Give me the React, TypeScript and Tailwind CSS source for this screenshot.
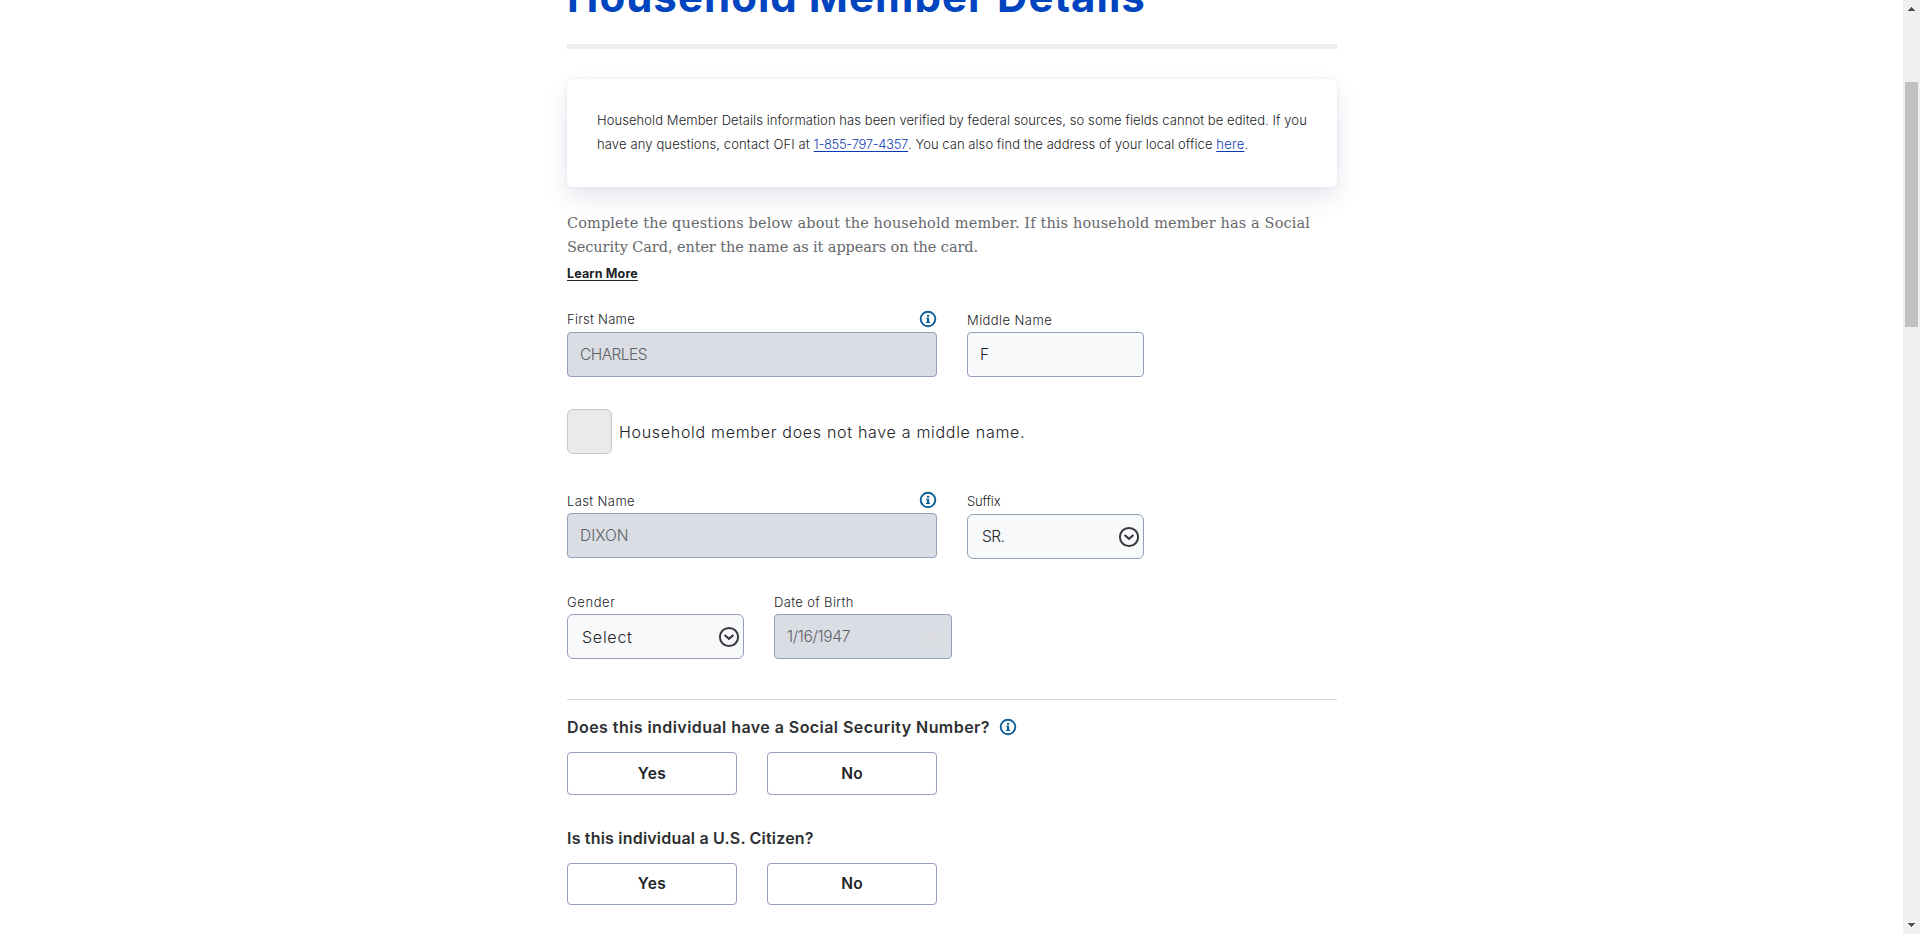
import type { ReactNode } from "react";

function InfoIcon({ className = "" }: { className?: string }) {
  return (
    <svg className={`h-[18px] w-[18px] shrink-0 ${className}`} viewBox="0 0 18 18" fill="none">
      <circle cx="9" cy="9" r="7.3" stroke="#0f5f97" strokeWidth="1.9" />
      <rect x="8" y="4.8" width="2.2" height="2" fill="#0f5f97" />
      <path d="M7.2 7.7h3v4h.8v1.3H7v-1.3h1V9h-.8z" fill="#0f5f97" />
    </svg>
  );
}

function ChevronCircle() {
  return (
    <svg className="h-[22px] w-[22px] shrink-0" viewBox="0 0 22 22" fill="none" stroke="#36383c">
      <circle cx="11" cy="11" r="9.1" strokeWidth="2" />
      <path d="M6.6 9 11 12.9 15.4 9" strokeWidth="2.2" />
    </svg>
  );
}

function CalendarIcon() {
  return (
    <svg className="mt-1 h-[14px] w-[13px]" viewBox="0 0 13 14" fill="none" stroke="#dcdcde">
      <rect x="1" y="2.5" width="11" height="10.5" />
      <path d="M1 5h11M4 0v3M9 0v3M4 8h5v3H4z" />
    </svg>
  );
}

function Label({ children, className = "" }: { children: ReactNode; className?: string }) {
  return <div className={`flex h-[23px] justify-between text-[13px] leading-5 font-light text-[#222529] ${className}`}>{children}</div>;
}

function YesNo({ height }: { height: string }) {
  const button = `w-[170px] rounded-[4px] border border-[#949fb8] bg-white text-[15.5px] font-semibold text-[#212326] ${height}`;
  return (
    <div className="mt-[13px] flex gap-[30px]">
      <button className={`${button} tracking-[0.5px]`}>Yes</button>
      <button className={`${button} tracking-[0.15px]`}>No</button>
    </div>
  );
}

const locked = "flex h-[45px] items-center justify-between rounded-[4px] border border-[#949fb8] bg-[#dadde4] px-3 text-[15.5px] font-light text-[#5e6165]";
const picker = "flex h-[45px] w-[177px] items-center justify-between rounded-[6px] border border-[#949fb8] bg-[#f8f9fb] pr-[3px] pl-[14px] font-light text-[#212326]";

export default function App() {
  return (
    <div className="flex h-[934px] overflow-hidden bg-white font-['Inter',sans-serif] text-[#212326]">
      <main className="flex-1 pl-[567px]">
        <div className="w-[770px]">
          <h1 className="-mt-[27px] text-[42px] leading-[48px] font-bold tracking-[1.03px] whitespace-nowrap text-[#0044bf]">
            Household Member Details
          </h1>
          <div className="mt-[23px] h-[5px] bg-[#ecedf1]" />

          <section className="mt-[30px] h-[108px] rounded-[6px] bg-white px-[30px] pt-[29px] text-[13px] leading-6 font-light whitespace-nowrap shadow-[0_11px_24px_rgba(40,60,110,0.12),0_0_4px_rgba(40,60,110,0.07)]">
            <p>
              <span className="tracking-[0.075px]">Household Member Details information has been verified by federal sources, so some fields cannot be edited. If you</span>
              <br />
              <span className="tracking-[0.13px]">have any questions, contact OFI at </span>
              <a className="tracking-[-0.32px] text-[#0b3cb5] underline decoration-1 underline-offset-2">1-855-797-4357</a>
              <span className="tracking-[0.05px]">. You can also find the address of your local office </span>
              <a className="tracking-[0.25px] text-[#0b3cb5] underline decoration-1 underline-offset-2">here</a>.
            </p>
          </section>

          <p className="mt-6 font-['DejaVu_Serif',serif] text-[14.5px] leading-6 whitespace-nowrap text-[#66686c]">
            <span className="tracking-[0.125px]">Complete the questions below about the household member. If this household member has a Social</span>
            <br />
            <span className="tracking-[-0.095px]">Security Card, enter the name as it appears on the card.</span>
          </p>
          <div className="mt-[5px] h-[19px] text-[12.5px] leading-5 font-bold tracking-[0.16px] underline underline-offset-2">Learn More</div>

          <div className="mt-[26px] flex gap-[30px]">
            <div className="w-[370px]">
              <Label>
                <span className="tracking-[0.25px]">First Name</span>
                <InfoIcon className="mt-[1px]" />
              </Label>
              <div className={`${locked} tracking-[-0.55px]`}>CHARLES</div>
            </div>
            <div className="w-[177px]">
              <Label className="pt-[1px]">
                <span className="tracking-[0.42px]">Middle Name</span>
              </Label>
              <div className="flex h-[45px] items-center rounded-[4px] border border-[#949fb8] bg-[#f8f9fb] px-3 text-[15.5px] font-light">F</div>
            </div>
          </div>

          <div className="mt-8 flex items-center gap-[7px]">
            <div className="h-[45px] w-[45px] rounded-[6px] border border-[#c5c7ca] bg-[#e9eaec]" />
            <span className="text-base font-light tracking-[0.7px]">Household member does not have a middle name.</span>
          </div>

          <div className="mt-9 flex gap-[30px]">
            <div className="w-[370px]">
              <Label className="pt-[1px]">
                <span className="tracking-[0.38px]">Last Name</span>
                <InfoIcon />
              </Label>
              <div className={locked}>DIXON</div>
            </div>
            <div className="w-[177px] pt-[1px]">
              <Label>
                <span className="tracking-[-0.15px]">Suffix</span>
              </Label>
              <div className={`${picker} text-[15.5px] tracking-[-0.6px]`}>
                SR.
                <ChevronCircle />
              </div>
            </div>
          </div>

          <div className="mt-8 flex gap-[30px]">
            <div className="w-[177px]">
              <Label className="pt-[1px]">
                <span className="tracking-[0.6px]">Gender</span>
              </Label>
              <div className={`${picker} text-base tracking-[0.75px]`}>
                Select
                <ChevronCircle />
              </div>
            </div>
            <div className="w-[178px]">
              <Label className="pt-[1px]">
                <span className="tracking-[0.35px]">Date of Birth</span>
              </Label>
              <div className={`${locked} tracking-[-0.35px]`}>
                1/16/1947
                <CalendarIcon />
              </div>
            </div>
          </div>

          <div className="mt-10 h-px bg-[#d9dade]" />

          <div className="mt-[15px] flex h-6 items-center gap-[9px] text-base font-semibold text-[#2d2f32]">
            <span className="tracking-[0.44px] whitespace-nowrap">Does this individual have a Social Security Number?</span>
            <InfoIcon />
          </div>
          <YesNo height="h-[43px]" />

          <div className="mt-[31px] h-6 text-base leading-6 font-semibold tracking-[0.2px] text-[#2d2f32]">Is this individual a U.S. Citizen?</div>
          <YesNo height="h-[42px]" />
        </div>
      </main>

      <aside className="flex w-[17px] flex-col justify-between bg-[#f0f0f0]">
        <div className="flex flex-col">
          <svg className="mt-[7px] ml-[5px] h-1 w-[7px]" viewBox="0 0 7 4" fill="#505050" shapeRendering="crispEdges">
            <path d="M3 0h1v1h1v1h1v1h1v1H0V3h1V2h1V1h1z" />
          </svg>
          <div className="mt-[71px] ml-[2px] h-[245px] w-[13px] bg-[#c1c1c1]" />
        </div>
        <svg className="mb-[7px] ml-[5px] h-1 w-[7px]" viewBox="0 0 7 4" fill="#505050" shapeRendering="crispEdges">
          <path d="M0 0h7v1H6v1H5v1H4v1H3V3H2V2H1V1H0z" />
        </svg>
      </aside>
    </div>
  );
}
